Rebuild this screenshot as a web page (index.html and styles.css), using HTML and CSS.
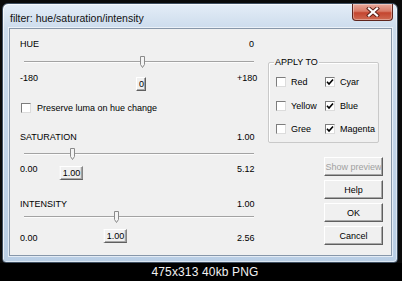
FILE: index.html
```html
<!DOCTYPE html>
<html>
<head>
    <link rel="stylesheet" href="styles.css">
</head>
<body>
    <div class="screen">
        <div class="window">
            <div class="titlebar">
                <span class="title">filter: hue/saturation/intensity</span>
                <div class="close">
                    <svg width="14" height="10" viewBox="0 0 14 10">
                        <path d="M3 1.5 L11 8.5 M11 1.5 L3 8.5" stroke="#5a1f17" stroke-width="4" stroke-linecap="square"/>
                        <path d="M3 1.5 L11 8.5 M11 1.5 L3 8.5" stroke="#ffffff" stroke-width="2.2" stroke-linecap="square"/>
                    </svg>
                </div>
            </div>

            <div class="client">
                <div class="sliders">
                    <div class="slider slider-hue">
                        <div class="slider-head"><span>HUE</span><span class="right right-end">0</span></div>
                        <div class="track">
                            <svg class="thumb" style="left: 51.3%" width="5" height="12" viewBox="0 0 5 12"><path d="M0.5 0.5 H4.5 V8.5 L2.5 11.5 L0.5 8.5 Z" fill="#f4f4f4" stroke="#8a8a8a"/></svg>
                        </div>
                        <div class="slider-foot">
                            <span>-180</span>
                            <span class="value" style="left: 51.7%">0</span>
                            <span class="right">+180</span>
                        </div>
                    </div>

                    <div class="check-row">
                        <span class="check"></span>
                        <span>Preserve luma on hue change</span>
                    </div>

                    <div class="slider slider-sat">
                        <div class="slider-head"><span>SATURATION</span><span class="right">1.00</span></div>
                        <div class="track">
                            <svg class="thumb" style="left: 20.9%" width="5" height="12" viewBox="0 0 5 12"><path d="M0.5 0.5 H4.5 V8.5 L2.5 11.5 L0.5 8.5 Z" fill="#f4f4f4" stroke="#8a8a8a"/></svg>
                        </div>
                        <div class="slider-foot">
                            <span>0.00</span>
                            <span class="value" style="left: 21.8%">1.00</span>
                            <span class="right">5.12</span>
                        </div>
                    </div>

                    <div class="slider slider-int">
                        <div class="slider-head"><span>INTENSITY</span><span class="right">1.00</span></div>
                        <div class="track">
                            <svg class="thumb" style="left: 40%" width="5" height="12" viewBox="0 0 5 12"><path d="M0.5 0.5 H4.5 V8.5 L2.5 11.5 L0.5 8.5 Z" fill="#f4f4f4" stroke="#8a8a8a"/></svg>
                        </div>
                        <div class="slider-foot">
                            <span>0.00</span>
                            <span class="value" style="left: 40.6%">1.00</span>
                            <span class="right">2.56</span>
                        </div>
                    </div>
                </div>

                <div class="side">
                    <div class="apply">
                        <span class="legend">APPLY TO</span>
                        <div class="apply-grid">
                            <div class="opt"><span class="check"></span>Red</div>
                            <div class="opt"><span class="check checked"><svg width="8" height="8" viewBox="0 0 8 8"><path d="M1 3.8 L3 6 L7 1.5" fill="none" stroke="#000" stroke-width="1.6"/></svg></span>Cyar</div>
                            <div class="opt"><span class="check"></span>Yellow</div>
                            <div class="opt"><span class="check checked"><svg width="8" height="8" viewBox="0 0 8 8"><path d="M1 3.8 L3 6 L7 1.5" fill="none" stroke="#000" stroke-width="1.6"/></svg></span>Blue</div>
                            <div class="opt"><span class="check"></span>Gree</div>
                            <div class="opt"><span class="check checked"><svg width="8" height="8" viewBox="0 0 8 8"><path d="M1 3.8 L3 6 L7 1.5" fill="none" stroke="#000" stroke-width="1.6"/></svg></span>Magenta</div>
                        </div>
                    </div>

                    <div class="buttons">
                        <button class="btn" disabled>Show preview</button>
                        <button class="btn">Help</button>
                        <button class="btn">OK</button>
                        <button class="btn">Cancel</button>
                    </div>
                </div>
            </div>
        </div>
        <div class="caption">475x313 40kb PNG</div>
    </div>
</body>
</html>
```

FILE: styles.css
```css
body {
    margin: 0;
    background: #0a0a0a;
    font-family: "Liberation Sans", Arial, sans-serif;
    font-size: 9px;
    color: #000;
}
.screen {
    width: 402px;
    height: 281px;
    overflow: hidden;
}
.window {
    width: 396px;
    height: 260px;
    margin: 3px 0 0 2px;
    box-sizing: border-box;
    border: 1px solid #3f4f61;
    border-radius: 6px 6px 4px 4px;
    background: linear-gradient(180deg, #e4edf7 0%, #cbdbec 10%, #c3d5e9 50%, #b9cee5 100%);
    box-shadow: inset 1px 1px 0 rgba(255,255,255,0.7), inset -1px -1px 0 rgba(255,255,255,0.5);
    display: flex;
    flex-direction: column;
}
.titlebar {
    height: 24px;
    display: flex;
    align-items: flex-start;
    flex-shrink: 0;
}
.title {
    font-size: 10.5px;
    line-height: 13px;
    padding: 8px 0 0 7px;
    color: #111;
}
.close {
    margin-left: auto;
    margin-right: 4px;
    width: 41px;
    height: 17px;
    box-sizing: border-box;
    border: 1px solid #5e241c;
    border-top: none;
    border-radius: 0 0 4px 4px;
    background: linear-gradient(180deg, #e9a99b 0%, #d97b68 45%, #c4452f 55%, #cf6a52 100%);
    box-shadow: inset 0 0 0 1px rgba(255,255,255,0.35);
    display: flex;
    align-items: center;
    justify-content: center;
}
.client {
    flex: 1;
    margin: 0 5px 6px 6px;
    border: 1px solid #8797aa;
    background: #f0f0f0;
    display: flex;
    padding: 9px 0 0 10px;
    box-shadow: 0 0 0 1px rgba(255,255,255,0.6);
}
.sliders {
    width: 234px;
    flex-shrink: 0;
}
.slider-head,
.slider-foot {
    height: 12px;
    line-height: 12px;
    display: flex;
    position: relative;
}
.right {
    margin-left: auto;
    width: 17px;
}
.right-end {
    text-align: right;
}
.track {
    height: 12px;
    margin-left: 4px;
    position: relative;
}
.track::before {
    content: "";
    position: absolute;
    left: 0;
    right: 0;
    top: 5px;
    border-top: 1px solid #a3a3a3;
    border-bottom: 1px solid #fcfcfc;
}
.thumb {
    position: absolute;
    top: 0;
    margin-left: -2px;
    display: block;
}
.value {
    position: absolute;
    transform: translateX(-50%);
    height: 14px;
    line-height: 13px;
    padding: 0 1px 0 2px;
    box-sizing: border-box;
    background: #f0f0f0;
    border: 1px solid;
    border-color: #fff #5f5f5f #5f5f5f #fff;
    box-shadow: inset -1px -1px 0 #a8a8a8;
}
.slider-hue .track { margin-top: 6px; }
.slider-hue .slider-foot { margin-top: 4px; }
.slider-hue .value { top: 5px; }
.slider-sat { margin-top: 17px; }
.slider-sat .track { margin-top: 5px; }
.slider-sat .slider-foot { margin-top: 3px; }
.slider-sat .value { top: 3px; }
.slider-int { margin-top: 23px; }
.slider-int .track { margin-top: 1px; }
.slider-int .slider-foot { margin-top: 9px; }
.slider-int .value { top: -3px; }

.check-row {
    margin-top: 18px;
    height: 12px;
    display: flex;
    align-items: center;
    gap: 6px;
    padding-left: 1px;
}
.check {
    width: 10px;
    height: 10px;
    box-sizing: border-box;
    flex-shrink: 0;
    background: #fff;
    border: 1px solid;
    border-color: #7d7d7d #dcdcdc #dcdcdc #7d7d7d;
    display: flex;
    align-items: center;
    justify-content: center;
}
.side {
    width: 115px;
    margin-left: 14px;
    flex-shrink: 0;
}
.apply {
    position: relative;
    width: 111px;
    margin-top: 24px;
    box-sizing: border-box;
    border: 1px solid #c9c9c9;
    border-radius: 2px;
    box-shadow: inset 1px 1px 0 #fff;
    padding: 13px 0 7px 7px;
}
.legend {
    position: absolute;
    top: -7px;
    left: 5px;
    padding: 0 1px;
    line-height: 12px;
    background: #f0f0f0;
}
.apply-grid {
    display: grid;
    grid-template-columns: 49px 1fr;
    grid-auto-rows: 12px;
    row-gap: 11.5px;
}
.opt {
    display: flex;
    align-items: center;
    gap: 5px;
    white-space: nowrap;
}
.buttons {
    margin-top: 14px;
    display: flex;
    flex-direction: column;
    align-items: flex-end;
    gap: 4px;
}
.btn {
    width: 59px;
    height: 19px;
    padding: 0;
    margin: 0;
    font-family: inherit;
    font-size: 9px;
    color: #000;
    white-space: nowrap;
    overflow: hidden;
    background: #f0f0f0;
    border: 1px solid;
    border-color: #fff #5f5f5f #5f5f5f #fff;
    box-shadow: inset -1px -1px 0 #a8a8a8;
}
.btn:disabled {
    color: #a0a0a0;
}
.caption {
    height: 18px;
    line-height: 18px;
    background: #000;
    color: #f2f2f2;
    font-size: 12px;
    letter-spacing: 0.15px;
    text-align: center;
    padding-left: 8px;
}
```
